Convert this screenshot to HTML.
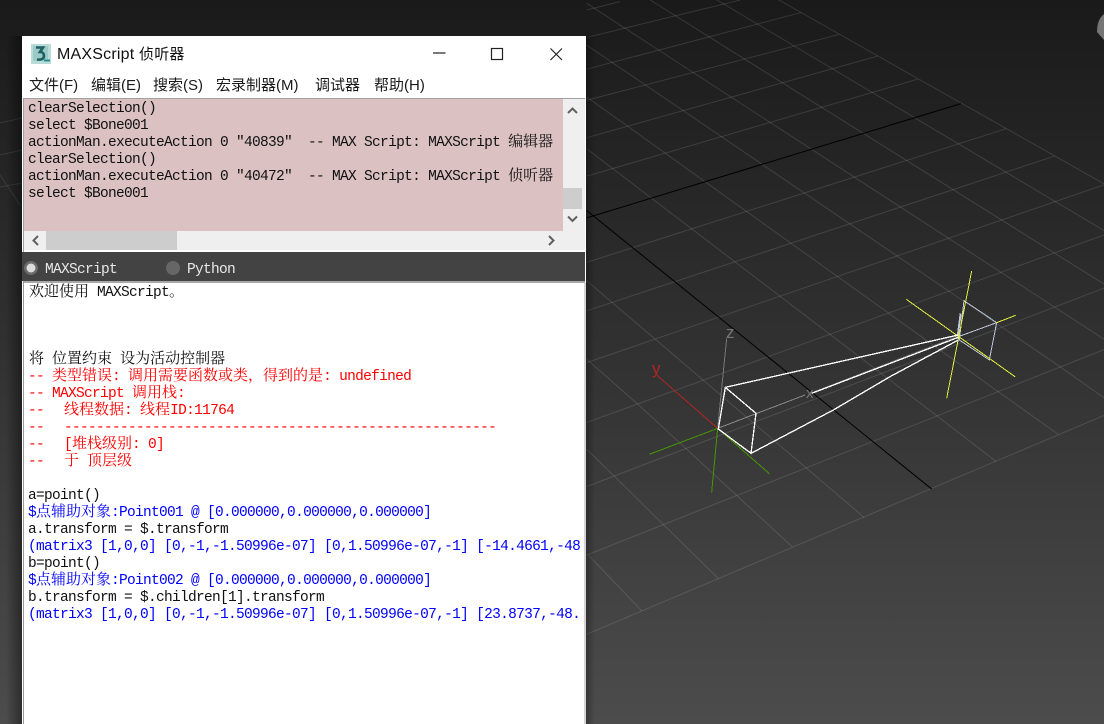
<!DOCTYPE html>
<html lang="zh">
<head>
<meta charset="utf-8">
<title>MAXScript 侦听器</title>
<style>
html,body{margin:0;padding:0;width:1104px;height:724px;overflow:hidden;background:#2a2a2a}
#bg{position:absolute;left:0;top:0;width:1104px;height:724px;background:linear-gradient(#1a1a1a 0,#323232 362px,#4c4c4c 724px)}
svg{position:absolute;left:0;top:0}
.ab{position:absolute}
#shL{left:6px;top:36px;width:16px;height:688px;background:linear-gradient(90deg,rgba(0,0,0,0),rgba(0,0,0,.4))}
#shR{left:586px;top:36px;width:9px;height:688px;background:linear-gradient(90deg,rgba(0,0,0,.28),rgba(0,0,0,0))}
#win{left:22px;top:36px;width:564px;height:688px;background:#fff}
.title{position:absolute;left:57px;top:45px;font:16px/20px "Liberation Sans","Noto Sans CJK SC",sans-serif;letter-spacing:.2px;color:#111;white-space:nowrap}
.title b{font-weight:400;font-size:15px}
.menu{position:absolute;top:76px;font:15px/20px "Liberation Sans","Noto Sans CJK SC",sans-serif;color:#1a1a1a;white-space:nowrap}
#pink{left:24px;top:99px;width:539px;height:132px;background:#dbc1c1}
#topline{left:23px;top:98px;width:562px;height:1px;background:#a0a0a0}
#leftline{left:23px;top:98px;width:1px;height:154px;background:#a0a0a0}
#vs{left:563px;top:99px;width:22px;height:153px;background:#efefef}
#hs{left:24px;top:231px;width:539px;height:19px;background:#efefef}
#hs2{left:563px;top:231px;width:20px;height:19px;background:#efefef}
#white2{left:24px;top:250px;width:561px;height:2px;background:#fff}
#vt{left:563px;top:188px;width:19px;height:21px;background:#cdcdcd}
#ht{left:46px;top:231px;width:131px;height:19px;background:#cdcdcd}
#bar{left:22px;top:252px;width:563px;height:29px;background:#434343}
#lower{left:24px;top:283px;width:560px;height:441px;background:#fff;overflow:hidden}
#lb1{left:23px;top:281px;width:562px;height:2px;background:#a8a8a8}
#lb2{left:23px;top:281px;width:1px;height:443px;background:#9a9a9a}
#lb3{left:584px;top:283px;width:2px;height:441px;background:#d4d4d4}
.t{position:absolute;height:17px;line-height:17px;white-space:pre;font-family:"Liberation Mono",monospace;font-size:14.5px;letter-spacing:-.7px;color:#111}
.t b{font-family:"Noto Serif CJK SC","Noto Sans CJK SC",serif;font-weight:400;font-size:15px;letter-spacing:0;line-height:0}
.r{color:#f00}.u{color:#00f}
.g{margin-left:20px}
</style>
</head>
<body>
<div id="bg"></div>

<svg width="1104" height="724" viewBox="0 0 1104 724" xmlns="http://www.w3.org/2000/svg">
 <g transform="translate(580,0) scale(.3342)" fill="none" stroke-width="3">
  <g stroke="#fff" stroke-opacity=".12">
   <path d="M20 30L120 5M20 112L480 0M20 207L660 38M20 300L775 103M20 412L890 168M20 527L1010 237M20 785L1275 385M20 930L1420 467M20 1085L1568 553M20 1264L1568 703M20 1456L1568 862M20 1661L1568 1046M20 1898L1568 1243"/>
   <path d="M595 0L1568 550M410 0L1568 690M210 0L1568 850M20 10L1568 1015M20 135L1420 1086L1568 1190M20 290L1250 1171L1430 1299M20 445L1070 1246L1245 1381M20 840L850 1548M20 1075L175 1211L635 1636M20 1344L415 1732M25 1661L185 1828"/>
  </g>
  <g stroke="#000">
   <path d="M20 652L1140 310"/>
   <path d="M20 630L1052 1463"/>
  </g>
 </g>
 <g stroke="#fff" stroke-opacity=".1" fill="none">
  <path d="M0 123L22 118M0 155L22 150M0 187L22 183M0 175L20 205"/>
 </g>

 <g transform="translate(630,260) scale(.33333)" fill="none" stroke-width="3" shape-rendering="crispEdges">
  <path d="M263 505L290 235" stroke="#777"/>
  <path d="M263 505L80 345" stroke="#b32424"/>
  <path d="M263 505L58 583M263 505L245 697M263 505L418 641" stroke="#459600"/>
  <path d="M263 505L525 405" stroke="#8a8a8a"/>
  <path d="M545 398L985 228" stroke="#8a8a8a" opacity=".5"/>
  <path d="M1002 122L1100 188L1078 300L988 240ZM985 230L1100 188" stroke="#bcc7da"/>
  <path d="M992 160L983 230" stroke="#bcc7da" stroke-width="6"/>
  <path d="M1025 33L950 415M829 118L1155 350M1100 188L1157 166" stroke="#e2ee3c"/>
  <path d="M286 382L378 460L363 580L265 507L286 382M286 382L985 225M545 400L985 232M363 580L610 450L780 350L985 240" stroke="#fff" stroke-width="4"/>
 </g>
 <text x="726" y="338" font-family="Liberation Sans, sans-serif" font-size="17" fill="#777">z</text>
 <text x="652" y="374" font-family="Liberation Sans, sans-serif" font-size="17" fill="#b32424">y</text>
 <text x="806" y="398" font-family="Liberation Sans, sans-serif" font-size="15" fill="#777">x</text>
 <path d="M1104 14C1099 18 1097 24 1097 32L1104 40Z" fill="#767676"/>
</svg>

<div class="ab" id="shL"></div>
<div class="ab" id="shR"></div>
<div class="ab" id="win"></div>

<svg width="1104" height="724" viewBox="0 0 1104 724" xmlns="http://www.w3.org/2000/svg" style="z-index:1">
 <rect x="31" y="44" width="20" height="20" fill="#b9dcd8"/>
 <rect x="33" y="46" width="15" height="15" fill="#9ccbc7"/>
 <path d="M36 47.500H43L40 52C43 52 44 54 44 56C44 59 41 60 37 59.500" fill="none" stroke="#1d5f63" stroke-width="2.600"/>
 <path d="M44 60.500H50" stroke="#2a8f93" stroke-width="2"/>
 <path d="M433 53H445.500" stroke="#222" stroke-width="1.200"/>
 <rect x="491.500" y="48.500" width="11" height="11" fill="none" stroke="#222" stroke-width="1.200"/>
 <path d="M550.500 48.500L562 60M562 48.500L550.500 60" stroke="#222" stroke-width="1.200"/>
</svg>

<div class="title" style="z-index:2">MAXScript <b>侦听器</b></div>
<div class="menu" style="left:29px;z-index:2">文件(F)</div>
<div class="menu" style="left:91px;z-index:2">编辑(E)</div>
<div class="menu" style="left:153px;z-index:2">搜索(S)</div>
<div class="menu" style="left:216px;z-index:2">宏录制器(M)</div>
<div class="menu" style="left:315px;z-index:2">调试器</div>
<div class="menu" style="left:374px;z-index:2">帮助(H)</div>

<div style="position:absolute;left:0;top:0;width:1104px;height:724px;z-index:2">
 <div class="ab" id="pink"></div>
 <div class="ab" id="vs"></div>
 <div class="ab" id="hs"></div>
 <div class="ab" id="hs2"></div>
 <div class="ab" id="white2"></div>
 <div class="ab" id="vt"></div>
 <div class="ab" id="ht"></div>
 <div class="ab" id="topline"></div>
 <div class="ab" id="leftline"></div>
 <div class="ab" id="bar"></div>
 <div class="ab" id="lb1"></div>
 <div class="ab" id="lb2"></div>
 <div class="ab" id="lb3"></div>
 <div class="ab" id="lower"></div>

 <svg width="1104" height="724" viewBox="0 0 1104 724" xmlns="http://www.w3.org/2000/svg">
  <path d="M568 113L572.500 108.500L577 113M568 216.500L572.500 221L577 216.500M549 236L553.500 240.500L549 245M38 236L33.500 240.500L38 245" fill="none" stroke="#606060" stroke-width="2"/>
  <circle cx="31" cy="268" r="7" fill="#6a6a6a"/>
  <circle cx="31" cy="268" r="4.500" fill="#dcdcdc"/>
  <circle cx="173" cy="268" r="7" fill="#666"/>
 </svg>

 <div class="t" style="left:28px;top:101px">clearSelection()</div>
 <div class="t" style="left:28px;top:118px">select $Bone001</div>
 <div class="t" style="left:28px;top:135px">actionMan.executeAction 0 "40839"  -- MAX Script: MAXScript <b>编辑器</b></div>
 <div class="t" style="left:28px;top:152px">clearSelection()</div>
 <div class="t" style="left:28px;top:169px">actionMan.executeAction 0 "40472"  -- MAX Script: MAXScript <b>侦听器</b></div>
 <div class="t" style="left:28px;top:186px">select $Bone001</div>

 <div class="t" style="left:45px;top:262px;color:#e8e8e8">MAXScript</div>
 <div class="t" style="left:187px;top:262px;color:#e8e8e8">Python</div>

 <div class="t" style="left:29px;top:285px"><b>欢迎使用</b> MAXScript<b>。</b></div>
 <div class="t" style="left:29px;top:352px"><b>将</b> <b>位置约束</b> <b>设为活动控制器</b></div>
 <div class="t r" style="left:28px;top:369px">-- <b>类型错误</b>: <b>调用需要函数或类，得到的是</b>: undefined</div>
 <div class="t r" style="left:28px;top:386px">-- MAXScript <b>调用栈</b>:</div>
 <div class="t r" style="left:28px;top:403px">--<span class="g"><b>线程数据</b>: <b>线程</b>ID:11764</span></div>
 <div class="t r" style="left:28px;top:420px">--<span class="g">------------------------------------------------------</span></div>
 <div class="t r" style="left:28px;top:437px">--<span class="g">[<b>堆栈级别</b>: 0]</span></div>
 <div class="t r" style="left:28px;top:454px">--<span class="g"><b>于</b> <b>顶层级</b></span></div>
 <div class="t" style="left:28px;top:488px">a=point()</div>
 <div class="t u" style="left:28px;top:505px">$<b>点辅助对象</b>:Point001 @ [0.000000,0.000000,0.000000]</div>
 <div class="t" style="left:28px;top:522px">a.transform = $.transform</div>
 <div class="t u" style="left:28px;top:539px;width:552px;overflow:hidden">(matrix3 [1,0,0] [0,-1,-1.50996e-07] [0,1.50996e-07,-1] [-14.4661,-48.5,0])</div>
 <div class="t" style="left:28px;top:556px">b=point()</div>
 <div class="t u" style="left:28px;top:573px">$<b>点辅助对象</b>:Point002 @ [0.000000,0.000000,0.000000]</div>
 <div class="t" style="left:28px;top:590px">b.transform = $.children[1].transform</div>
 <div class="t u" style="left:28px;top:607px;width:552px;overflow:hidden">(matrix3 [1,0,0] [0,-1,-1.50996e-07] [0,1.50996e-07,-1] [23.8737,-48.5,0])</div>
</div>
</body>
</html>
